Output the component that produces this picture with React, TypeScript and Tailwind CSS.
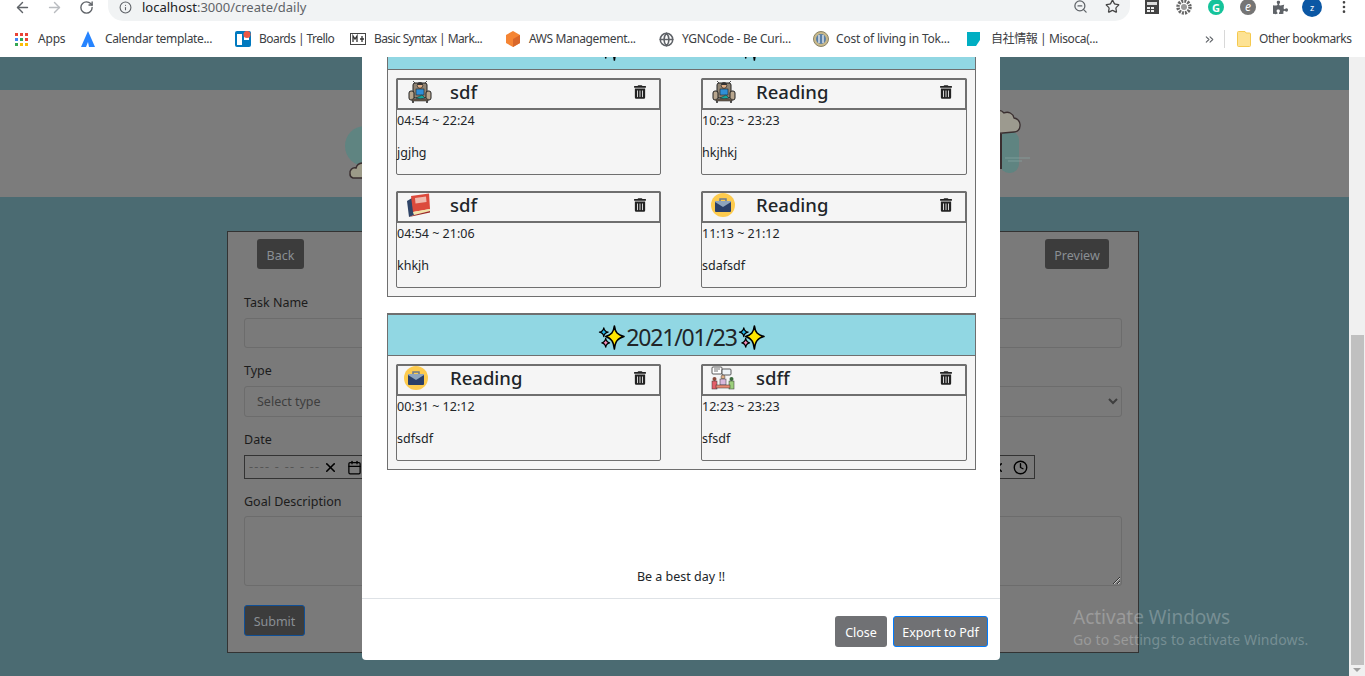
import { ArrowLeft, ArrowRight, RotateCw, Info, ZoomOut, Star, Globe, MoreVertical, ChevronsRight, X, Calendar, Clock } from "lucide-react";
import { FaPuzzlePiece, FaTrashAlt } from "react-icons/fa";

const FONT = "font-['Noto_Sans','Noto_Sans_CJK_JP',sans-serif]";

function Sparkles() {
  return (
    <svg viewBox="0 0 28 28" className="h-[27px] w-[27px] shrink-0">
      <path d="M17 2 C18 9 20 11 27 13 C20 15 18 18 17 26 C16 18 14 15 8 13 C14 11 16 9 17 2Z" fill="#ffe600" stroke="#000" strokeWidth="1.6" strokeLinejoin="round" />
      <path d="M6 4 C6.500 7 7.500 8 10.500 8.500 C7.500 9 6.500 10 6 13 C5.500 10 4.500 9 1.500 8.500 C4.500 8 5.500 7 6 4Z" fill="#22b8ec" stroke="#000" strokeWidth="1.3" strokeLinejoin="round" />
      <path d="M8 15 C8.500 18 9.500 19 12 19.500 C9.500 20 8.500 21 8 24 C7.500 21 6.500 20 4 19.500 C6.500 19 7.500 18 8 15Z" fill="#f08cb8" stroke="#000" strokeWidth="1.300" strokeLinejoin="round" />
    </svg>
  );
}

function SofaIcon() {
  return (
    <svg viewBox="0 0 24 24" className="h-6 w-6">
      <path d="M5 1 L8 4 M19 1 L16 4" stroke="#555" strokeWidth="1" />
      <rect x="5" y="3" width="14" height="15" rx="2" fill="#8f8474" stroke="#222" />
      <rect x="1" y="11" width="5" height="9" rx="2" fill="#b8a68e" stroke="#222" />
      <rect x="18" y="11" width="5" height="9" rx="2" fill="#b8a68e" stroke="#222" />
      <circle cx="12" cy="5.500" r="2.800" fill="#e0b088" stroke="#222" strokeWidth="0.700" />
      <path d="M9.200 5 a2.800 2.800 0 0 1 5.600 0Z" fill="#333" />
      <rect x="8" y="9" width="8" height="6" fill="#2f8fd8" stroke="#222" strokeWidth="0.600" />
      <path d="M8 18 L14 15 L17 18 L12 19Z" fill="#14a59c" stroke="#222" strokeWidth="0.500" />
      <rect x="4" y="19" width="16" height="2" fill="#6f6050" stroke="#222" strokeWidth="0.500" />
      <path d="M5 21v2M19 21v2" stroke="#222" strokeWidth="1.500" />
    </svg>
  );
}

function BookIcon() {
  return (
    <svg viewBox="0 0 24 24" className="h-6 w-6">
      <path d="M1 8 L6 5 L8 22 L3 24Z" fill="#2f4468" />
      <path d="M5 3 L23 0.500 L24 16 L7 19Z" fill="#dc4a3c" />
      <path d="M7 19 L24 16 L24 18 L8 22Z" fill="#f2e3a8" />
      <path d="M3 24 L8 22 L24 18 L24 19.500 Z" fill="#9c2c26" />
      <path d="M9 5 L20 3.500 L20.500 9 L9.500 10.500Z" fill="#f0b8ac" />
    </svg>
  );
}

function CaseIcon() {
  return (
    <svg viewBox="0 0 24 24" className="h-6 w-6">
      <circle cx="12" cy="12" r="12" fill="#fdcb4e" />
      <path d="M9 8V6h6v2" fill="none" stroke="#6a7a90" strokeWidth="1.500" />
      <rect x="4" y="8" width="16" height="11" rx="1" fill="#2a3f68" />
      <path d="M4 8h16v1l-8 5-8-5Z" fill="#8ea4bc" />
    </svg>
  );
}

function MeetingIcon() {
  return (
    <svg viewBox="0 0 24 24" className="h-6 w-6">
      <rect x="1" y="1" width="10" height="7" rx="1" fill="#fff" stroke="#333" strokeWidth="0.800" />
      <path d="M3 3h6M3 5h4" stroke="#333" strokeWidth="0.700" />
      <rect x="11" y="3" width="9" height="6" rx="1" fill="#eef4f8" stroke="#333" strokeWidth="0.800" />
      <circle cx="3.500" cy="13" r="2" fill="#8a4a3c" />
      <circle cx="12" cy="11" r="2" fill="#e0b088" stroke="#333" strokeWidth="0.500" />
      <circle cx="20.500" cy="13" r="2" fill="#3a6a3c" />
      <rect x="1" y="15" width="5" height="8" fill="#e4606a" stroke="#333" strokeWidth="0.500" />
      <rect x="18" y="15" width="5" height="8" fill="#9ccf7c" stroke="#333" strokeWidth="0.500" />
      <rect x="9" y="13" width="6" height="6" fill="#d8b8dc" stroke="#333" strokeWidth="0.500" />
      <rect x="5" y="19" width="14" height="3" fill="#e88a72" stroke="#333" strokeWidth="0.500" />
    </svg>
  );
}

const TASKS = {
  first: [
    { icon: <SofaIcon />, name: "sdf", time: "04:54 ~ 22:24", note: "jgjhg", iconGap: "ml-[10px]", slot: "w-[52px]" },
    { icon: <SofaIcon />, name: "Reading", time: "10:23 ~ 23:23", note: "hkjhkj", iconGap: "ml-[9px]", slot: "w-[53px]" },
    { icon: <BookIcon />, name: "sdf", time: "04:54 ~ 21:06", note: "khkjh", iconGap: "ml-[8px]", slot: "w-[52px]" },
    { icon: <CaseIcon />, name: "Reading", time: "11:13 ~ 21:12", note: "sdafsdf", iconGap: "ml-[8px]", slot: "w-[53px]" },
  ],
  second: [
    { icon: <CaseIcon />, name: "Reading", time: "00:31 ~ 12:12", note: "sdfsdf", iconGap: "ml-[6px]", slot: "w-[52px]" },
    { icon: <MeetingIcon />, name: "sdff", time: "12:23 ~ 23:23", note: "sfsdf", iconGap: "ml-[8px]", slot: "w-[53px]" },
  ],
};

type Task = (typeof TASKS.first)[number];

function TaskCard({ task }: { task: Task }) {
  return (
    <div className="h-[97px] w-full rounded-[2px] border border-[#6f6f6f] text-[12.5px] text-[#212529]">
      <div className="-m-px flex h-[32px] items-center rounded-t-[2px] border-2 border-[#6f6f6f]">
        <div className={`${task.slot} shrink-0 -translate-y-[2px]`}>
          <div className={`${task.iconGap} w-6`}>{task.icon}</div>
        </div>
        <span className="flex-1 -translate-y-[2px] text-[18.5px] font-medium leading-none">{task.name}</span>
        <FaTrashAlt className="mb-[5px] mr-[13px] h-[14px] w-[12px] shrink-0 text-[#222]" />
      </div>
      <p className="mt-[3px] leading-[18px]">{task.time}</p>
      <p className="mt-[14px] leading-[18px]">{task.note}</p>
    </div>
  );
}

function DayGroup({ date, tasks, className, headerPad }: { date: string; tasks: Task[]; className: string; headerPad: string }) {
  return (
    <section className={`${className} w-[589px] border border-t-2 border-[#6f6f6f] bg-[#f5f5f5]`}>
      <header className={`${headerPad} flex h-[41px] items-center justify-center border-b border-[#6f6f6f] bg-[#91d7e3] text-[23px] leading-none tracking-[-1.2px] text-[#212529]`}>
        <Sparkles />
        <span className="mx-[1px]">{date}</span>
        <Sparkles />
      </header>
      <div className="grid grid-cols-[265px_266px] gap-x-[40px] gap-y-[16px] pb-[8px] pl-[8px] pt-[8px]">
        {tasks.map((t, i) => (
          <TaskCard key={i} task={t} />
        ))}
      </div>
    </section>
  );
}

const BOOKMARKS = [
  { w: "w-[66px]", slot: "w-[23px]", track: "tracking-[-0.2px]", label: "Apps", icon: <div className="grid grid-cols-3 gap-[2px]">{["#ea4335","#ea4335","#ea4335","#4285f4","#34a853","#ea4335","#34a853","#fbbc05","#fbbc05"].map((c, i) => <span key={i} className="h-[3px] w-[3px]" style={{ background: c }} />)}</div> },
  { w: "w-[154px]", slot: "w-[24px]", track: "tracking-[-0.35px]", label: "Calendar template...", icon: <svg viewBox="0 0 14 16" className="h-4 w-[14px]"><path d="M7 0 L14 16 L8 16 L7 11 L5 16 L0 16Z" fill="#2684ff" /></svg> },
  { w: "w-[115px]", slot: "w-[24px]", track: "tracking-[-0.55px]", label: "Boards | Trello", icon: <svg viewBox="0 0 16 16" className="h-4 w-4"><rect width="16" height="16" rx="2" fill="#0079bf" /><rect x="2" y="3" width="5" height="11" fill="#fff" /><rect x="9" y="3" width="5" height="6" fill="#fff" /><circle cx="12" cy="3.500" r="3.500" fill="#eb5a46" /></svg> },
  { w: "w-[155px]", slot: "w-[24px]", track: "tracking-[-0.6px]", label: "Basic Syntax | Mark...", icon: <svg viewBox="0 0 16 12" className="h-3 w-4"><rect x="0.500" y="0.500" width="15" height="11" fill="#fff" stroke="#444" /><path d="M3 9V3l2 3 2-3v6M12 3v6M10 6h4" fill="none" stroke="#333" strokeWidth="1.300" /></svg> },
  { w: "w-[154px]", slot: "w-[24px]", track: "tracking-[-0.4px]", label: "AWS Management...", icon: <svg viewBox="0 0 16 16" className="h-4 w-4"><path d="M8 0 L15 4 V12 L8 16 L1 12 V4Z" fill="#f58534" /><path d="M8 8 L15 4 V12 L8 16Z" fill="#d9672a" /></svg> },
  { w: "w-[154px]", slot: "w-[23px]", track: "tracking-[-0.25px]", label: "YGNCode - Be Curi...", icon: <Globe className="h-[15px] w-[15px] text-[#5f6368]" strokeWidth={2.5} /> },
  { w: "w-[154px]", slot: "w-[23px]", track: "tracking-[-0.2px]", label: "Cost of living in Tok...", icon: <svg viewBox="0 0 16 16" className="h-4 w-4"><circle cx="8" cy="8" r="7.500" fill="#c9b98a" stroke="#8a8468" /><circle cx="8" cy="8" r="5" fill="#5a80a8" /><path d="M6 4v8M10 4v8" stroke="#eee" strokeWidth="1.300" /></svg> },
  { w: "w-[238px]", slot: "w-[24px]", track: "tracking-[-0.4px]", label: "自社情報 | Misoca(...", icon: <svg viewBox="0 0 14 16" className="h-4 w-[14px]"><path d="M0 1H13V9L9 15H0Z" fill="#00aec2" /></svg> },
];

const BTN_DARK = "rounded-[3px] bg-[#3c3c3c] text-[12.5px] text-[#8a8f94]";

export default function App() {
  return (
    <div className={`${FONT} relative h-[676px] w-[1365px] overflow-hidden bg-white`}>
      <div className="flex h-[22px] items-center pb-[8px] pl-[14px] text-[#5f6368]">
        <ArrowLeft className="h-[17px] w-[17px] shrink-0" strokeWidth={2} />
        <ArrowRight className="ml-[15px] h-[17px] w-[17px] shrink-0 text-[#b9bcc0]" strokeWidth={2} />
        <RotateCw className="ml-[16px] h-[15px] w-[15px] shrink-0" strokeWidth={2.2} />
        <div className="ml-[14px] flex h-[21px] w-[1022px] self-start items-end rounded-b-[15px] bg-[#f1f3f4] pb-[7px] pl-[11px] pr-[10px]">
          <Info className="h-[13px] w-[13px] shrink-0" />
          <span className="ml-[10px] flex-1 text-[13px] leading-[14px]">
            <span className="text-[#202124]">localhost</span>:3000/create/daily
          </span>
          <ZoomOut className="h-[15px] w-[15px] shrink-0" />
          <Star className="ml-[17px] h-[15px] w-[15px] shrink-0 text-[#444]" />
        </div>
        <svg viewBox="0 0 14 14" className="ml-[15px] h-[14px] w-[14px] shrink-0">
          <rect width="14" height="14" fill="#444" />
          <rect x="2" y="2" width="10" height="3" fill="#ddd" />
          <path d="M2 7h3v2H2zM6 7h3v2H6zM2 10h3v2H2zM6 10h3v2H6z" fill="#eee" />
        </svg>
        <svg viewBox="0 0 16 16" className="ml-[17px] h-4 w-4 shrink-0">
          <circle cx="8" cy="8" r="6" fill="none" stroke="#666" strokeWidth="3.500" strokeDasharray="2 1.100" />
          <circle cx="8" cy="8" r="3" fill="#999" />
        </svg>
        <div className="ml-[16px] flex h-4 w-4 shrink-0 items-center justify-center rounded-full bg-[#15c39a] text-[11px] font-bold leading-none text-white">G</div>
        <div className="ml-[16px] flex h-4 w-4 shrink-0 items-center justify-center rounded-full bg-[#757575] text-[12px] italic leading-none text-white">e</div>
        <FaPuzzlePiece className="ml-[17px] h-[15px] w-[15px] shrink-0 text-[#5f6368]" />
        <div className="ml-[14px] flex h-[20px] w-[20px] shrink-0 items-center justify-center rounded-full bg-[#0b57a4] text-[9px] leading-none text-white">z</div>
        <MoreVertical className="ml-[14px] h-4 w-4 shrink-0 text-[#444]" />
      </div>

      <div className="flex h-[35px] items-center pb-[1px] pl-[15px] text-[12px] text-[#3c4043]">
        {BOOKMARKS.map((b) => (
          <div key={b.label} className={`${b.w} flex shrink-0 items-center`}>
            <div className={`${b.slot} flex shrink-0 items-center`}>{b.icon}</div>
            <span className={`${b.track} whitespace-nowrap`}>{b.label}</span>
          </div>
        ))}
        <ChevronsRight className="ml-[-2px] h-[13px] w-[13px] shrink-0 text-[#5f6368]" />
        <div className="ml-[8px] h-[18px] w-px bg-[#d8d8d8]" />
        <svg viewBox="0 0 14 16" className="ml-[12px] h-4 w-[14px] shrink-0">
          <path d="M0.500 1.500 a1 1 0 0 1 1-1 H8 L9 2 H12.500 a1 1 0 0 1 1 1 V14.500 a1 1 0 0 1-1 1 H1.500 a1 1 0 0 1-1-1Z" fill="#fde293" stroke="#f5c94e" />
        </svg>
        <span className="ml-[8px] whitespace-nowrap tracking-[-0.45px]">Other bookmarks</span>
      </div>

      <div className="flex h-[619px]">
        <main className="w-[1349px] bg-[#4b6b72] pt-[33px]">
          <div className="flex h-[107px] items-center justify-center gap-[597px] bg-[#7c7c7c] pl-[18px]">
            <svg viewBox="0 0 40 60" className="h-[60px] w-[40px] overflow-visible">
              <circle cx="20" cy="32" r="20" fill="#5f8481" />
              <path d="M5 60a5 5 0 0 1 6-6a7 7 0 0 1 13-1h16v11H8a4 4 0 0 1-3-4Z" fill="#9c9a88" stroke="#3a2f30" strokeWidth="1.500" />
            </svg>
            <svg viewBox="0 0 40 70" className="h-[70px] w-[40px] overflow-visible">
              <rect x="18" y="22" width="19" height="42" rx="9" fill="#5f8481" />
              <rect x="18" y="25" width="2" height="35" fill="#3a2f30" />
              <path d="M10 25V6a7 7 0 0 1 12-2a7 7 0 0 1 10 5a7 7 0 0 1 6 8a6 6 0 0 1-6 6Z" fill="#9c9a8f" stroke="#3a2f30" strokeWidth="1.300" />
              <path d="M23 49h25M26 52h14" stroke="#8aa8a4" strokeWidth="0.700" />
            </svg>
          </div>

          <form className="ml-[227px] mt-[34px] h-[422px] w-[912px] border border-[#333] bg-[#7a7a7a] px-[16px] pt-[7px] text-[12.5px] text-[#1c1c1c]">
            <div className="flex justify-between px-[13px]">
              <button type="button" className={`${BTN_DARK} h-[30px] w-[47px] pt-[5px]`}>Back</button>
              <button type="button" className={`${BTN_DARK} h-[30px] w-[64px] pt-[5px]`}>Preview</button>
            </div>
            <label className="mt-[24px] block leading-[20px]">Task Name</label>
            <input className="mt-[5px] block h-[30px] w-[878px] rounded-[3px] border border-[#6c6c6c] bg-transparent" />
            <label className="mt-[13px] block leading-[20px]">Type</label>
            <select className="mt-[5px] block h-[31px] w-[878px] rounded-[3px] border border-[#6c6c6c] bg-transparent pl-[8px] text-[#3e3e3e]">
              <option>Select type</option>
            </select>
            <label className="mt-[13px] block leading-[20px]">Date</label>
            <div className="mt-[5px] flex h-[24px] items-center">
              <div className="flex h-full w-[140px] items-center border border-[#333] pl-[4px] text-[#555]">
                <span className="flex-1 whitespace-nowrap tracking-[1.3px]">---- - -- - --</span>
                <X className="mr-[9px] h-[15px] w-[15px] text-black" strokeWidth={2.5} />
                <Calendar className="mr-[21px] h-[15px] w-[15px] text-black" strokeWidth={2} />
              </div>
              <div className="ml-[511px] flex h-full w-[140px] items-center justify-end border border-[#333] pr-[6px]">
                <X className="mr-[8px] h-[15px] w-[15px] text-black" strokeWidth={2.5} />
                <Clock className="h-[15px] w-[15px] text-black" strokeWidth={2.2} />
              </div>
            </div>
            <label className="mt-[13px] block leading-[20px]">Goal Description</label>
            <textarea className="mt-[4px] block h-[70px] w-[878px] rounded-[3px] border border-[#6c6c6c] bg-transparent" />
            <button type="button" className={`${BTN_DARK} mt-[19px] block h-[31px] w-[61px] border border-[#0f4f96] pt-[3px]`}>Submit</button>
          </form>
        </main>
        <div className="flex w-[16px] flex-col items-center bg-[#f0f0f0]">
          <div className="ml-[1px] mt-[278px] h-[330px] w-[13px] bg-[#c0c0c0]" />
          <div className="mt-[3px] h-0 w-0 border-x-[4px] border-t-[4px] border-x-transparent border-t-[#a0a0a0]" />
        </div>
      </div>

      {/* modal, sits over the dimmed page */}
      <div className="absolute left-[362px] top-[57px] flex h-[603px] w-[638px] flex-col overflow-hidden rounded-b-[4px] bg-white">
        <div className="flex-1 px-[25px]">
          <DayGroup className="-mt-[30px]" headerPad="pb-[1px]" date="2021/01/22" tasks={TASKS.first} />
          <DayGroup className="mt-[16px]" headerPad="pt-[5px]" date="2021/01/23" tasks={TASKS.second} />
          <p className="mt-[98px] text-center text-[12.5px] leading-[18px] text-[#212529]">Be a best day !!</p>
        </div>
        <div className="flex h-[62px] items-start justify-end gap-[6px] border-t border-[#dee2e6] pr-[12px] pt-[17px] text-[12.5px] text-white">
          <button type="button" className="h-[31px] w-[52px] rounded-[3px] bg-[#707174] pt-[3px]">Close</button>
          <button type="button" className="h-[31px] w-[95px] rounded-[3px] border border-[#007bff] bg-[#707174] pt-[3px]">Export to Pdf</button>
        </div>
      </div>

      <div className="pointer-events-none absolute left-[1073px] top-[604px] text-white/25">
        <p className="text-[19px] leading-[26px]">Activate Windows</p>
        <p className="text-[14px] leading-[19px] tracking-[0.1px]">Go to Settings to activate Windows.</p>
      </div>
    </div>
  );
}
